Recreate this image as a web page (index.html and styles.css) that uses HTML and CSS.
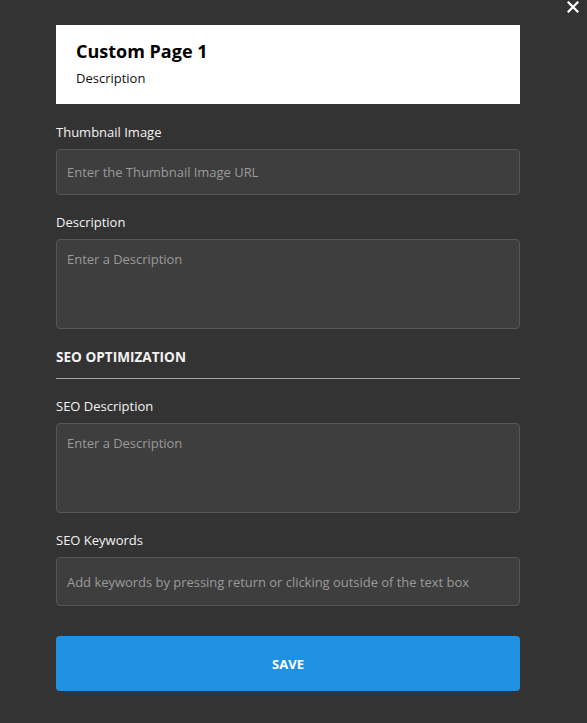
FILE: index.html
```html
<!DOCTYPE html>
<html>
<head>
<meta charset="utf-8">
<link rel="stylesheet" href="styles.css">
</head>
<body>
<button class="close" aria-label="Close">
  <svg width="12" height="12" viewBox="0 0 12 12"><path d="M1.5 1.5 L10.5 10.5 M10.5 1.5 L1.5 10.5" stroke="#fff" stroke-width="2.2" stroke-linecap="square"/></svg>
</button>
<div class="panel">
  <div class="header">
    <div class="title">Custom Page 1</div>
    <div class="subtitle">Description</div>
  </div>
  <label class="label first">Thumbnail Image</label>
  <div class="input"><span class="ph">Enter the Thumbnail Image URL</span></div>
  <label class="label">Description</label>
  <div class="textarea"><span class="ph">Enter a Description</span></div>
  <div class="section">SEO OPTIMIZATION</div>
  <div class="rule"></div>
  <label class="label">SEO Description</label>
  <div class="textarea"><span class="ph">Enter a Description</span></div>
  <label class="label">SEO Keywords</label>
  <div class="input tall"><span class="ph">Add keywords by pressing return or clicking outside of the text box</span></div>
  <button class="save">SAVE</button>
</div>
</body>
</html>
```
FILE: styles.css
```css
html, body { margin: 0; padding: 0; }
body {
  background: #333333;
  font-family: "Open Sans", "Noto Sans", sans-serif;
  width: 587px;
  height: 723px;
  position: relative;
  overflow: hidden;
}
.close {
  position: absolute;
  right: 8px;
  top: 1px;
  width: 12px;
  height: 12px;
  padding: 0;
  border: 0;
  background: none;
  line-height: 0;
}
.panel {
  width: 464px;
  margin-left: 56px;
  padding-top: 25px;
  display: flex;
  flex-direction: column;
}
.header {
  background: #fff;
  height: 79px;
  box-sizing: border-box;
  padding: 14px 20px 0;
}
.title {
  font-weight: 700;
  font-size: 18px;
  line-height: 24px;
  color: #000;
}
.subtitle {
  font-size: 13px;
  line-height: 18px;
  color: #111;
  margin-top: 6px;
}
.label {
  font-size: 13px;
  line-height: 18px;
  color: #f2f2f2;
  margin-top: 18px;
  margin-bottom: 8px;
}
.label.first { margin-top: 19px; }
.input, .textarea {
  background: #3e3e3e;
  border: 1px solid #565656;
  border-radius: 4px;
  box-sizing: border-box;
  padding: 0 10px;
  font-size: 13px;
  color: #9a9a9a;
  letter-spacing: -0.03px;
}
.input {
  height: 46px;
  display: flex;
  align-items: center;
}
.input.tall { height: 49px; }
.textarea {
  height: 90px;
  padding-top: 10px;
  line-height: 18px;
}
.ph { color: #9a9a9a; }
.section {
  font-size: 13.6px;
  font-weight: 700;
  color: #f2f2f2;
  line-height: 19px;
  margin-top: 18px;
}
.rule {
  height: 1px;
  background: #a8a8a8;
  margin-top: 12px;
}
.save {
  margin-top: 30px;
  height: 55px;
  border: 0;
  border-radius: 4px;
  background: #2090e3;
  color: #fff;
  font-family: "Open Sans", "Noto Sans", sans-serif;
  font-weight: 700;
  font-size: 13px;
}
```
